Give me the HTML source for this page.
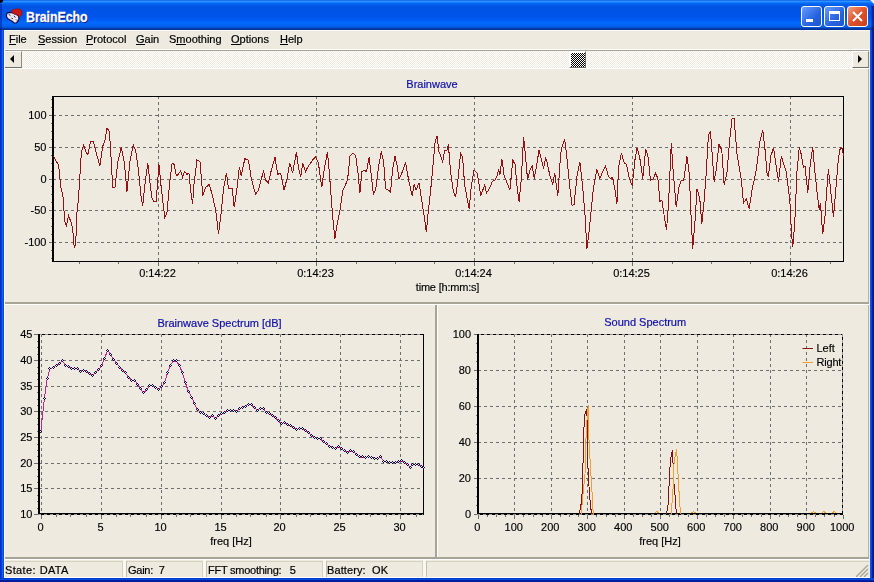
<!DOCTYPE html>
<html><head><meta charset="utf-8">
<style>
*{margin:0;padding:0;box-sizing:border-box}
html,body{width:874px;height:582px;overflow:hidden;background:#0054E3;font-family:"Liberation Sans",sans-serif}
.abs{position:absolute}
#title{left:0;top:0;width:874px;height:30px;border-radius:7px 7px 0 0;
 background:linear-gradient(to bottom,#0058EE 0%,#3593FF 4%,#288EFF 6%,#127DFF 8%,#036FFC 10%,#0262EE 14%,#0057E5 20%,#0054E3 24%,#0055EB 56%,#005BF5 66%,#026AFE 76%,#0062EF 86%,#0052D6 92%,#0040AB 94%,#003092 100%)}
#ttext{left:26px;top:9px;color:#fff;font-weight:bold;font-size:14px;line-height:16px;text-shadow:1px 1px #0F1089;-webkit-text-stroke:0.3px #fff;transform:scaleX(0.88);transform-origin:0 0}
#client{left:4px;top:30px;width:866px;height:548px;background:#EEEAE0;overflow:hidden}
.menu,.status{will-change:transform;-webkit-text-stroke:0.2px #000}
.status{letter-spacing:-0.25px}
.menu{top:3px;font-size:11px;line-height:13px;color:#000}
.menu u{text-decoration:none;position:relative}
.menu u:after{content:"";position:absolute;left:0;right:0;top:11px;height:1px;background:#000}
.tb{top:6px;width:21px;height:21px;border:1px solid #fff;border-radius:3px}
.status{font-size:11px;line-height:13px;color:#000;white-space:nowrap}
.btn{background:#EEEAE0;border-top:1px solid #fff;border-left:1px solid #fff;border-right:1px solid #8C897A;border-bottom:1px solid #716F64}
</style></head><body>
<div id="title" class="abs"></div>
<div class="abs" style="left:0;top:4px;width:2px;height:26px;background:rgba(0,20,140,0.45)"></div>
<div class="abs" style="left:871px;top:5px;width:1px;height:25px;background:rgba(0,20,140,0.3)"></div>
<div class="abs" style="left:872px;top:6px;width:2px;height:24px;background:rgba(0,10,110,0.6)"></div>
<div class="abs" style="left:0;top:0;width:3px;height:3px;background:#000;border-bottom-right-radius:3px"></div>
<div class="abs" style="left:0;top:0;width:2px;height:2px;background:#000"></div>
<div class="abs" style="left:870px;top:0;width:4px;height:4px;background:#F2F0E6;clip-path:polygon(0 0,100% 0,100% 100%)"></div>
<!-- icon -->
<svg class="abs" style="left:0;top:0" width="26" height="28" viewBox="0 0 26 28">
 <path d="M6.5 14.5 L7.5 12.8 L9.5 12.3 L12 12.6 L13.5 13.5 L16.5 14.5 L18.5 16 L19 18.5 L18 21 L16.5 22.8 L14 23 L12.5 21.5 L10 20 L7.5 18.5 L6.5 16.5 Z" fill="#EEE6EE" stroke="#10104A" stroke-width="1.2" stroke-linejoin="round"/>
 <path d="M11.5 11.8 L12.5 9.8 L14.5 9.2 L17 8.8 L19.5 9 L21.5 10.5 L22 12.5 L21.5 15 L20 16.8 L18.5 16 L16.5 14.5 L13.5 13.5 Z" fill="#C81818" stroke="#8A1010" stroke-width="0.6"/>
 <path d="M8.5 14 L10.5 15.8 M14 15.8 L15.3 17.5 M11.5 18.2 L13 18.8 M16 19.5 L17 20.5" stroke="#2A2A48" fill="none" stroke-width="1"/>
</svg>
<div id="ttext" class="abs">BrainEcho</div>
<!-- title buttons -->
<div class="abs tb" style="left:801px;background:linear-gradient(135deg,#6A9CFF,#2663E0 60%,#1F55D0)"><div class="abs" style="left:4px;top:12px;width:7px;height:3px;background:#fff"></div></div>
<div class="abs tb" style="left:824px;background:linear-gradient(135deg,#6A9CFF,#2663E0 60%,#1F55D0)"><div class="abs" style="left:4px;top:4px;width:11px;height:10px;border:1px solid #fff;border-top-width:3px"></div></div>
<div class="abs tb" style="left:847px;background:linear-gradient(135deg,#F0A080,#E0502A 50%,#C8401F)">
 <svg class="abs" style="left:4px;top:4px" width="11" height="11"><path d="M1 1L10 10M10 1L1 10" stroke="#fff" stroke-width="2"/></svg></div>

<div id="client" class="abs">
 <div class="abs" style="left:0;top:0;width:866px;height:1px;background:#FAF8F4"></div>
 <!-- menu -->
 <div class="abs menu" style="left:5px"><u>F</u>ile</div>
 <div class="abs menu" style="left:34px"><u>S</u>ession</div>
 <div class="abs menu" style="left:82px"><u>P</u>rotocol</div>
 <div class="abs menu" style="left:132px"><u>G</u>ain</div>
 <div class="abs menu" style="left:165px">S<u>m</u>oothing</div>
 <div class="abs menu" style="left:227px"><u>O</u>ptions</div>
 <div class="abs menu" style="left:276px"><u>H</u>elp</div>
 <div class="abs" style="left:0;top:19px;width:866px;height:1px;background:#fff"></div>
 <!-- scrollbar -->
 <div class="abs" style="left:0;top:20px;width:865px;height:1px;background:#A8A596"></div>
 <div class="abs" style="left:0;top:21px;width:865px;height:17px;background:repeating-conic-gradient(#FFFFFF 0 25%,#EEEAE0 0 50%) 0 0/2px 2px"></div>
 <div class="abs btn" style="left:0;top:21px;width:18px;height:17px"></div>
 <svg class="abs" style="left:6px;top:25px" width="5" height="8"><path d="M4 0V8L0 4Z" fill="#000"/></svg>
 <div class="abs btn" style="left:848px;top:21px;width:17px;height:17px"></div>
 <svg class="abs" style="left:854px;top:25px" width="5" height="8"><path d="M0 0V8L4 4Z" fill="#000"/></svg>
 <div class="abs" style="left:565px;top:21px;width:17px;height:17px;border-top:1px solid #fff;border-left:1px solid #fff;border-right:1px solid #716F64;border-bottom:1px solid #716F64;background:#fff">
  <div class="abs" style="left:1px;top:1px;width:14px;height:14px;background:repeating-conic-gradient(#000 0 25%,#fff 0 50%) 0 0/2px 2px"></div></div>
 <div class="abs" style="left:0;top:38px;width:866px;height:1px;background:#fff"></div>
 <div class="abs" style="left:864px;top:39px;width:1px;height:489px;background:#B8B5A6"></div>

 <!-- splitters -->
 <div class="abs" style="left:0;top:272px;width:865px;height:2px;background:#A8A596"></div>
 <div class="abs" style="left:0;top:274px;width:865px;height:1px;background:#fff"></div>
 <div class="abs" style="left:431px;top:275px;width:2px;height:252px;background:#A8A596"></div>
 <div class="abs" style="left:433px;top:275px;width:1px;height:252px;background:#fff"></div>

 <!-- status bar -->
 <div class="abs" style="left:0;top:527px;width:866px;height:21px">
  <div class="abs" style="left:0;top:0;width:865px;height:2px;background:#A8A596"></div>
  <div class="abs" style="left:0;top:2px;width:866px;height:1px;background:#fff"></div>
  <div class="abs" style="left:0;top:4px;width:865px;height:1px;background:#D6D2C2"></div>
  <div class="abs" style="left:865px;top:3px;width:1px;height:18px;background:#fff"></div>
  <div class="abs" style="left:0;top:20px;width:866px;height:1px;background:#fff"></div>
  <div class="abs status" style="left:1px;top:7px;letter-spacing:0.35px;word-spacing:-1.5px">State:&nbsp; DATA</div>
  <div class="abs" style="left:118px;top:4px;width:1px;height:16px;background:#D6D2C2"></div>
  <div class="abs" style="left:119px;top:3px;width:3px;height:17px;background:#FAF8F2"></div>
  <div class="abs" style="left:122px;top:4px;width:1px;height:16px;background:#C4C0B0"></div>
  <div class="abs status" style="left:124px;top:7px">Gain:&nbsp; 7</div>
  <div class="abs" style="left:198px;top:4px;width:1px;height:16px;background:#D6D2C2"></div>
  <div class="abs" style="left:199px;top:3px;width:3px;height:17px;background:#FAF8F2"></div>
  <div class="abs" style="left:202px;top:4px;width:1px;height:16px;background:#C4C0B0"></div>
  <div class="abs status" style="left:204px;top:7px">FFT smoothing:&nbsp;&nbsp; 5</div>
  <div class="abs" style="left:318px;top:4px;width:1px;height:16px;background:#D6D2C2"></div>
  <div class="abs" style="left:319px;top:3px;width:3px;height:17px;background:#FAF8F2"></div>
  <div class="abs" style="left:322px;top:4px;width:1px;height:16px;background:#C4C0B0"></div>
  <div class="abs status" style="left:323px;top:7px;letter-spacing:0.1px">Battery:&nbsp; OK</div>
  <div class="abs" style="left:418px;top:4px;width:1px;height:16px;background:#D6D2C2"></div>
  <div class="abs" style="left:419px;top:3px;width:3px;height:17px;background:#FAF8F2"></div>
  <div class="abs" style="left:422px;top:4px;width:1px;height:16px;background:#C4C0B0"></div>
  <svg class="abs" style="left:852px;top:8px" width="13" height="12"><path d="M12 0L0 12M12 4L4 12M12 8L8 12" stroke="#A8A596" stroke-width="1.4"/></svg>
 </div>
</div>
<svg class="abs" style="left:0;top:0;will-change:transform" width="874" height="582">
<g shape-rendering="crispEdges">
<line x1="53" y1="115.5" x2="843" y2="115.5" stroke="#6E6E6E" stroke-dasharray="3 3"/>
<line x1="49" y1="115.5" x2="52" y2="115.5" stroke="#6E6E6E"/>
<line x1="53" y1="147.5" x2="843" y2="147.5" stroke="#6E6E6E" stroke-dasharray="3 3"/>
<line x1="49" y1="147.5" x2="52" y2="147.5" stroke="#6E6E6E"/>
<line x1="53" y1="179.5" x2="843" y2="179.5" stroke="#6E6E6E" stroke-dasharray="3 3"/>
<line x1="49" y1="179.5" x2="52" y2="179.5" stroke="#6E6E6E"/>
<line x1="53" y1="210.5" x2="843" y2="210.5" stroke="#6E6E6E" stroke-dasharray="3 3"/>
<line x1="49" y1="210.5" x2="52" y2="210.5" stroke="#6E6E6E"/>
<line x1="53" y1="242.5" x2="843" y2="242.5" stroke="#6E6E6E" stroke-dasharray="3 3"/>
<line x1="49" y1="242.5" x2="52" y2="242.5" stroke="#6E6E6E"/>
<line x1="158.5" y1="96" x2="158.5" y2="262" stroke="#6E6E6E" stroke-dasharray="3 3"/>
<line x1="158.5" y1="262" x2="158.5" y2="266" stroke="#6E6E6E"/>
<line x1="316.5" y1="96" x2="316.5" y2="262" stroke="#6E6E6E" stroke-dasharray="3 3"/>
<line x1="316.5" y1="262" x2="316.5" y2="266" stroke="#6E6E6E"/>
<line x1="474.5" y1="96" x2="474.5" y2="262" stroke="#6E6E6E" stroke-dasharray="3 3"/>
<line x1="474.5" y1="262" x2="474.5" y2="266" stroke="#6E6E6E"/>
<line x1="632.5" y1="96" x2="632.5" y2="262" stroke="#6E6E6E" stroke-dasharray="3 3"/>
<line x1="632.5" y1="262" x2="632.5" y2="266" stroke="#6E6E6E"/>
<line x1="790.5" y1="96" x2="790.5" y2="262" stroke="#6E6E6E" stroke-dasharray="3 3"/>
<line x1="790.5" y1="262" x2="790.5" y2="266" stroke="#6E6E6E"/>
<line x1="79.5" y1="262" x2="79.5" y2="264" stroke="#6E6E6E"/>
<line x1="118.5" y1="262" x2="118.5" y2="264" stroke="#6E6E6E"/>
<line x1="198.5" y1="262" x2="198.5" y2="264" stroke="#6E6E6E"/>
<line x1="237.5" y1="262" x2="237.5" y2="264" stroke="#6E6E6E"/>
<line x1="276.5" y1="262" x2="276.5" y2="264" stroke="#6E6E6E"/>
<line x1="356.5" y1="262" x2="356.5" y2="264" stroke="#6E6E6E"/>
<line x1="395.5" y1="262" x2="395.5" y2="264" stroke="#6E6E6E"/>
<line x1="434.5" y1="262" x2="434.5" y2="264" stroke="#6E6E6E"/>
<line x1="514.5" y1="262" x2="514.5" y2="264" stroke="#6E6E6E"/>
<line x1="553.5" y1="262" x2="553.5" y2="264" stroke="#6E6E6E"/>
<line x1="592.5" y1="262" x2="592.5" y2="264" stroke="#6E6E6E"/>
<line x1="672.5" y1="262" x2="672.5" y2="264" stroke="#6E6E6E"/>
<line x1="711.5" y1="262" x2="711.5" y2="264" stroke="#6E6E6E"/>
<line x1="750.5" y1="262" x2="750.5" y2="264" stroke="#6E6E6E"/>
<line x1="830.5" y1="262" x2="830.5" y2="264" stroke="#6E6E6E"/>
<line x1="51" y1="99.5" x2="52" y2="99.5" stroke="#6E6E6E"/>
<line x1="51" y1="107.5" x2="52" y2="107.5" stroke="#6E6E6E"/>
<line x1="51" y1="123.5" x2="52" y2="123.5" stroke="#6E6E6E"/>
<line x1="51" y1="131.5" x2="52" y2="131.5" stroke="#6E6E6E"/>
<line x1="51" y1="139.5" x2="52" y2="139.5" stroke="#6E6E6E"/>
<line x1="51" y1="155.5" x2="52" y2="155.5" stroke="#6E6E6E"/>
<line x1="51" y1="163.5" x2="52" y2="163.5" stroke="#6E6E6E"/>
<line x1="51" y1="171.5" x2="52" y2="171.5" stroke="#6E6E6E"/>
<line x1="51" y1="186.5" x2="52" y2="186.5" stroke="#6E6E6E"/>
<line x1="51" y1="194.5" x2="52" y2="194.5" stroke="#6E6E6E"/>
<line x1="51" y1="202.5" x2="52" y2="202.5" stroke="#6E6E6E"/>
<line x1="51" y1="218.5" x2="52" y2="218.5" stroke="#6E6E6E"/>
<line x1="51" y1="226.5" x2="52" y2="226.5" stroke="#6E6E6E"/>
<line x1="51" y1="234.5" x2="52" y2="234.5" stroke="#6E6E6E"/>
<line x1="51" y1="250.5" x2="52" y2="250.5" stroke="#6E6E6E"/>
<line x1="51" y1="258.5" x2="52" y2="258.5" stroke="#6E6E6E"/>
<rect x="52" y="96" width="2" height="166" fill="#000"/>
<rect x="52" y="261" width="792" height="1" fill="#000"/>
<rect x="52" y="96" width="792" height="1" fill="#000"/>
<rect x="843" y="96" width="1" height="166" fill="#000"/>
</g>
<polyline points="53.4,155.9 56.3,161.6 58.6,164.5 60.8,187.3 62.8,194.4 64.8,221.5 66.5,225.8 68.5,215.8 71.4,222.9 72.8,230.1 74.2,247.2 75.7,244.3 77.1,210.1 78.5,198.7 81.4,151.6 83.7,145.1 85.7,151.6 87.9,154.5 90.5,141.6 93.4,141.6 96.2,153.0 99.9,165.9 102.8,145.9 104.8,141.6 107.0,127.9 109.3,131.7 110.5,147.3 112.7,187.3 115.0,187.3 117.9,161.6 121.3,147.3 124.2,161.6 127.0,191.6 129.9,161.6 133.3,145.1 135.6,150.2 138.4,170.2 141.3,198.7 142.7,205.8 145.6,178.7 147.8,163.0 149.8,181.6 152.1,198.7 154.1,201.5 156.1,201.5 159.0,164.5 161.2,187.3 164.7,217.2 166.9,212.9 169.8,181.6 172.1,163.0 174.1,164.5 176.4,175.9 178.4,174.4 180.6,170.7 182.6,177.3 184.6,171.6 186.9,174.4 188.9,173.0 190.6,190.1 192.6,204.4 194.0,184.4 196.9,160.2 200.0,161.6 202.8,195.8 205.7,187.3 209.4,184.4 212.8,197.3 215.7,210.1 218.5,234.3 220.8,215.8 223.7,187.3 226.5,173.0 228.5,188.7 232.2,188.7 234.2,207.2 237.1,187.3 239.3,167.3 241.3,175.9 244.8,158.7 248.5,160.2 251.3,178.7 255.6,194.4 258.5,190.1 261.3,178.7 263.6,171.6 265.6,180.1 268.4,183.0 271.3,170.2 275.0,157.3 277.8,174.4 280.7,173.0 284.1,190.1 287.0,178.7 289.8,163.0 292.7,173.0 296.4,151.6 298.4,167.3 300.7,177.3 302.7,163.0 305.5,171.6 308.4,165.9 312.6,160.2 315.5,156.5 318.4,163.0 321.8,187.3 324.1,170.2 327.5,151.6 329.8,178.7 332.6,215.8 334.9,238.6 337.1,224.4 340.0,210.1 342.8,190.1 345.7,184.4 347.7,178.7 350.0,155.9 352.8,153.0 355.7,155.9 358.0,173.0 359.9,193.0 361.9,171.6 364.2,170.2 366.5,171.6 369.1,157.3 371.4,175.9 373.4,194.4 375.6,190.1 378.5,167.3 381.3,151.6 383.6,161.6 385.6,188.7 388.5,190.1 390.5,192.4 392.7,168.7 395.0,156.5 397.0,164.5 399.0,178.7 401.3,174.4 405.6,163.0 408.4,178.7 412.1,195.8 414.1,184.4 416.1,190.1 419.0,183.0 421.3,197.3 424.1,215.8 426.4,232.3 428.4,210.1 430.4,193.0 432.7,168.7 435.0,143.1 437.0,135.9 439.0,151.6 441.2,157.3 442.7,161.6 444.7,150.2 446.9,150.2 448.4,144.5 450.4,170.2 453.2,190.1 455.5,197.3 457.8,181.6 460.6,153.0 462.6,157.3 464.6,184.4 466.9,197.3 469.2,208.7 471.2,187.3 474.0,170.2 477.1,173.0 478.6,181.6 480.8,195.8 482.8,190.1 484.8,185.0 486.5,193.0 489.4,188.7 492.2,181.6 495.1,180.1 497.1,175.9 498.5,169.6 499.9,174.4 501.9,159.3 504.2,175.9 507.1,183.0 509.9,190.1 512.8,160.2 515.1,164.5 517.1,187.3 519.1,201.5 521.3,178.7 523.6,137.4 525.6,157.3 527.6,180.1 529.9,170.2 532.2,165.9 534.2,178.7 537.0,163.0 539.0,150.2 541.3,158.7 543.6,168.7 545.6,157.3 547.6,164.5 549.9,175.9 552.7,184.4 554.7,173.0 557.8,195.8 560.7,153.0 562.7,144.5 564.7,138.8 567.0,158.7 569.8,187.3 572.1,205.8 574.1,204.4 577.0,175.9 579.8,161.6 582.7,187.3 584.9,212.9 586.9,248.6 589.2,230.1 591.2,210.1 593.2,190.1 595.5,175.9 596.9,169.6 599.8,178.7 602.6,171.6 605.5,165.9 608.3,175.9 610.3,178.7 612.6,177.3 615.5,193.0 616.9,204.4 618.6,167.3 621.4,153.0 624.3,163.0 626.5,164.5 629.4,178.7 632.2,185.8 635.1,158.7 637.1,147.9 639.9,158.7 642.8,178.7 645.7,148.8 647.9,155.9 650.5,180.1 653.4,178.7 655.6,173.0 657.9,178.7 659.9,201.5 661.9,200.1 664.2,215.8 666.5,230.1 668.5,204.4 671.3,143.1 673.3,173.0 676.2,207.2 679.0,187.3 681.3,180.1 683.6,181.0 687.0,156.5 689.3,174.4 691.3,221.5 692.7,248.6 695.0,221.5 697.0,188.7 699.8,198.7 701.8,224.4 704.1,201.5 706.1,174.4 708.4,135.9 710.4,130.8 712.1,153.0 714.1,181.6 716.1,170.2 719.0,144.5 721.8,150.2 724.1,184.4 726.9,173.0 729.8,138.8 732.1,118.2 734.1,118.8 736.9,153.0 741.2,178.7 743.5,203.0 746.3,198.7 749.2,208.7 752.0,190.1 756.0,171.6 759.9,141.6 762.8,130.2 765.1,150.2 767.1,174.4 768.5,175.9 770.8,155.9 773.6,147.9 775.9,164.5 778.5,181.6 781.3,155.9 783.3,163.0 786.2,171.6 788.5,190.1 789.9,201.5 791.3,230.1 792.7,247.2 794.7,224.4 797.0,171.6 799.3,147.3 801.3,154.5 803.3,167.3 805.0,165.9 807.8,193.0 810.1,165.9 812.7,146.8 815.0,173.0 817.0,191.6 819.3,210.1 820.4,203.0 822.7,234.3 825.0,215.8 827.0,187.3 828.4,168.7 831.2,195.8 833.5,217.2 835.5,193.0 838.4,158.7 840.4,147.3 842.1,148.8 843.5,155.9" fill="none" stroke="#961212" stroke-width="1" shape-rendering="crispEdges"/>
<text x="46.5" y="119" text-anchor="end" font-family="Liberation Sans" font-size="11" stroke="#000" stroke-width="0.15">100</text>
<text x="46.5" y="151" text-anchor="end" font-family="Liberation Sans" font-size="11" stroke="#000" stroke-width="0.15">50</text>
<text x="46.5" y="183" text-anchor="end" font-family="Liberation Sans" font-size="11" stroke="#000" stroke-width="0.15">0</text>
<text x="46.5" y="214" text-anchor="end" font-family="Liberation Sans" font-size="11" stroke="#000" stroke-width="0.15">-50</text>
<text x="46.5" y="246" text-anchor="end" font-family="Liberation Sans" font-size="11" stroke="#000" stroke-width="0.15">-100</text>
<text x="157.5" y="277" text-anchor="middle" font-family="Liberation Sans" font-size="11" stroke="#000" stroke-width="0.15">0:14:22</text>
<text x="315.5" y="277" text-anchor="middle" font-family="Liberation Sans" font-size="11" stroke="#000" stroke-width="0.15">0:14:23</text>
<text x="473.5" y="277" text-anchor="middle" font-family="Liberation Sans" font-size="11" stroke="#000" stroke-width="0.15">0:14:24</text>
<text x="631.5" y="277" text-anchor="middle" font-family="Liberation Sans" font-size="11" stroke="#000" stroke-width="0.15">0:14:25</text>
<text x="789.5" y="277" text-anchor="middle" font-family="Liberation Sans" font-size="11" stroke="#000" stroke-width="0.15">0:14:26</text>
<text x="447.5" y="290.5" text-anchor="middle" font-family="Liberation Sans" font-size="11" stroke="#000" stroke-width="0.15" letter-spacing="-0.2">time [h:mm:s]</text>
<text x="432" y="88" text-anchor="middle" font-family="Liberation Sans" font-size="11" fill="#1010A8" stroke="#1010A8" stroke-width="0.2">Brainwave</text>
<g shape-rendering="crispEdges">
<line x1="39" y1="360.5" x2="423" y2="360.5" stroke="#6E6E6E" stroke-dasharray="3 3"/>
<line x1="39" y1="386.5" x2="423" y2="386.5" stroke="#6E6E6E" stroke-dasharray="3 3"/>
<line x1="39" y1="411.5" x2="423" y2="411.5" stroke="#6E6E6E" stroke-dasharray="3 3"/>
<line x1="39" y1="437.5" x2="423" y2="437.5" stroke="#6E6E6E" stroke-dasharray="3 3"/>
<line x1="39" y1="463.5" x2="423" y2="463.5" stroke="#6E6E6E" stroke-dasharray="3 3"/>
<line x1="39" y1="488.5" x2="423" y2="488.5" stroke="#6E6E6E" stroke-dasharray="3 3"/>
<line x1="34" y1="334.5" x2="38" y2="334.5" stroke="#6E6E6E"/>
<line x1="34" y1="360.5" x2="38" y2="360.5" stroke="#6E6E6E"/>
<line x1="34" y1="386.5" x2="38" y2="386.5" stroke="#6E6E6E"/>
<line x1="34" y1="411.5" x2="38" y2="411.5" stroke="#6E6E6E"/>
<line x1="34" y1="437.5" x2="38" y2="437.5" stroke="#6E6E6E"/>
<line x1="34" y1="463.5" x2="38" y2="463.5" stroke="#6E6E6E"/>
<line x1="34" y1="488.5" x2="38" y2="488.5" stroke="#6E6E6E"/>
<line x1="34" y1="514.5" x2="38" y2="514.5" stroke="#6E6E6E"/>
<line x1="37" y1="508.5" x2="38" y2="508.5" stroke="#6E6E6E"/>
<line x1="37" y1="501.5" x2="38" y2="501.5" stroke="#6E6E6E"/>
<line x1="37" y1="495.5" x2="38" y2="495.5" stroke="#6E6E6E"/>
<line x1="37" y1="482.5" x2="38" y2="482.5" stroke="#6E6E6E"/>
<line x1="37" y1="476.5" x2="38" y2="476.5" stroke="#6E6E6E"/>
<line x1="37" y1="469.5" x2="38" y2="469.5" stroke="#6E6E6E"/>
<line x1="37" y1="456.5" x2="38" y2="456.5" stroke="#6E6E6E"/>
<line x1="37" y1="450.5" x2="38" y2="450.5" stroke="#6E6E6E"/>
<line x1="37" y1="444.5" x2="38" y2="444.5" stroke="#6E6E6E"/>
<line x1="37" y1="431.5" x2="38" y2="431.5" stroke="#6E6E6E"/>
<line x1="37" y1="424.5" x2="38" y2="424.5" stroke="#6E6E6E"/>
<line x1="37" y1="418.5" x2="38" y2="418.5" stroke="#6E6E6E"/>
<line x1="37" y1="405.5" x2="38" y2="405.5" stroke="#6E6E6E"/>
<line x1="37" y1="399.5" x2="38" y2="399.5" stroke="#6E6E6E"/>
<line x1="37" y1="392.5" x2="38" y2="392.5" stroke="#6E6E6E"/>
<line x1="37" y1="379.5" x2="38" y2="379.5" stroke="#6E6E6E"/>
<line x1="37" y1="373.5" x2="38" y2="373.5" stroke="#6E6E6E"/>
<line x1="37" y1="367.5" x2="38" y2="367.5" stroke="#6E6E6E"/>
<line x1="37" y1="354.5" x2="38" y2="354.5" stroke="#6E6E6E"/>
<line x1="37" y1="347.5" x2="38" y2="347.5" stroke="#6E6E6E"/>
<line x1="37" y1="341.5" x2="38" y2="341.5" stroke="#6E6E6E"/>
<line x1="41.5" y1="334" x2="41.5" y2="514" stroke="#6E6E6E" stroke-dasharray="3 3"/>
<line x1="41.5" y1="515" x2="41.5" y2="519" stroke="#6E6E6E"/>
<line x1="101.5" y1="334" x2="101.5" y2="514" stroke="#6E6E6E" stroke-dasharray="3 3"/>
<line x1="101.5" y1="515" x2="101.5" y2="519" stroke="#6E6E6E"/>
<line x1="161.5" y1="334" x2="161.5" y2="514" stroke="#6E6E6E" stroke-dasharray="3 3"/>
<line x1="161.5" y1="515" x2="161.5" y2="519" stroke="#6E6E6E"/>
<line x1="221.5" y1="334" x2="221.5" y2="514" stroke="#6E6E6E" stroke-dasharray="3 3"/>
<line x1="221.5" y1="515" x2="221.5" y2="519" stroke="#6E6E6E"/>
<line x1="280.5" y1="334" x2="280.5" y2="514" stroke="#6E6E6E" stroke-dasharray="3 3"/>
<line x1="280.5" y1="515" x2="280.5" y2="519" stroke="#6E6E6E"/>
<line x1="340.5" y1="334" x2="340.5" y2="514" stroke="#6E6E6E" stroke-dasharray="3 3"/>
<line x1="340.5" y1="515" x2="340.5" y2="519" stroke="#6E6E6E"/>
<line x1="400.5" y1="334" x2="400.5" y2="514" stroke="#6E6E6E" stroke-dasharray="3 3"/>
<line x1="400.5" y1="515" x2="400.5" y2="519" stroke="#6E6E6E"/>
<line x1="56.5" y1="515" x2="56.5" y2="517" stroke="#6E6E6E"/>
<line x1="70.5" y1="515" x2="70.5" y2="517" stroke="#6E6E6E"/>
<line x1="86.5" y1="515" x2="86.5" y2="517" stroke="#6E6E6E"/>
<line x1="116.5" y1="515" x2="116.5" y2="517" stroke="#6E6E6E"/>
<line x1="130.5" y1="515" x2="130.5" y2="517" stroke="#6E6E6E"/>
<line x1="146.5" y1="515" x2="146.5" y2="517" stroke="#6E6E6E"/>
<line x1="176.5" y1="515" x2="176.5" y2="517" stroke="#6E6E6E"/>
<line x1="190.5" y1="515" x2="190.5" y2="517" stroke="#6E6E6E"/>
<line x1="206.5" y1="515" x2="206.5" y2="517" stroke="#6E6E6E"/>
<line x1="236.5" y1="515" x2="236.5" y2="517" stroke="#6E6E6E"/>
<line x1="250.5" y1="515" x2="250.5" y2="517" stroke="#6E6E6E"/>
<line x1="266.5" y1="515" x2="266.5" y2="517" stroke="#6E6E6E"/>
<line x1="296.5" y1="515" x2="296.5" y2="517" stroke="#6E6E6E"/>
<line x1="310.5" y1="515" x2="310.5" y2="517" stroke="#6E6E6E"/>
<line x1="326.5" y1="515" x2="326.5" y2="517" stroke="#6E6E6E"/>
<line x1="356.5" y1="515" x2="356.5" y2="517" stroke="#6E6E6E"/>
<line x1="370.5" y1="515" x2="370.5" y2="517" stroke="#6E6E6E"/>
<line x1="386.5" y1="515" x2="386.5" y2="517" stroke="#6E6E6E"/>
<line x1="416.5" y1="515" x2="416.5" y2="517" stroke="#6E6E6E"/>
<rect x="38" y="334" width="2" height="181" fill="#000"/>
<rect x="38" y="513" width="386" height="1" fill="#000"/>
<line x1="38" y1="514.5" x2="424" y2="514.5" stroke="#9A9890"/>
<line x1="41" y1="514.5" x2="424" y2="514.5" stroke="#000" stroke-dasharray="3 3"/>
<line x1="40" y1="334.5" x2="423" y2="334.5" stroke="#9A9890"/>
<line x1="42" y1="334.5" x2="423" y2="334.5" stroke="#000" stroke-dasharray="3 3"/>
<rect x="423" y="334" width="1" height="181" fill="#000"/>
</g>
<polyline points="40.8,431.5 44.4,398.5 47.3,378.5 50.0,368.9 53.3,367.2 56.5,365.3 59.6,363.4 62.5,361.0 65.4,365.3 68.5,367.0 71.6,368.4 74.5,368.4 77.4,368.4 80.5,371.3 83.7,370.1 86.5,371.3 89.4,373.7 92.6,375.4 95.7,372.5 98.6,369.6 101.5,365.8 104.6,358.1 107.7,350.4 110.6,354.5 113.5,359.3 116.6,363.4 119.8,367.2 122.6,370.1 125.5,373.0 128.7,377.3 131.8,380.2 134.7,380.2 137.6,384.5 140.7,388.9 143.6,393.0 146.7,389.8 149.6,385.7 152.7,385.0 155.9,387.4 158.7,389.4 161.6,386.9 164.8,382.1 167.6,372.5 170.3,365.3 173.2,361.0 176.3,361.0 179.4,365.3 182.3,373.0 185.2,382.1 188.3,391.3 191.7,397.1 194.4,403.8 197.3,409.8 200.4,412.2 203.3,413.9 206.4,415.8 209.3,417.0 212.4,415.8 215.3,418.2 218.4,415.8 221.3,413.9 224.3,413.0 227.2,410.1 230.1,410.6 233.2,410.1 236.4,411.3 239.2,408.9 242.1,407.2 245.3,406.5 248.4,404.1 251.3,404.8 254.2,407.7 257.3,410.1 260.4,408.2 263.3,408.9 266.2,412.0 269.3,413.7 272.4,415.4 275.3,417.3 278.2,420.9 281.3,423.3 284.5,422.6 287.4,424.5 290.2,425.7 293.4,427.4 296.5,429.3 299.4,428.8 302.3,428.1 305.4,430.5 308.5,432.9 311.4,435.3 314.3,437.0 317.4,438.5 320.6,439.0 323.4,441.8 326.6,443.8 329.5,446.2 332.6,447.4 335.5,448.6 338.4,446.9 341.5,448.6 344.6,451.0 347.5,452.2 350.4,451.0 353.5,451.5 356.6,454.6 359.5,457.0 362.4,457.0 365.5,457.7 368.7,456.3 371.6,457.7 374.7,458.2 377.6,458.7 380.7,457.0 383.6,461.1 386.5,461.8 389.6,462.5 392.7,462.5 395.6,462.5 398.5,461.8 401.6,460.6 404.7,462.5 407.6,464.2 410.0,467.3 412.4,464.2 415.3,464.2 418.5,464.9 421.6,466.6 423.3,467.3" fill="none" stroke="#C02890" stroke-width="1" shape-rendering="crispEdges"/>
<path d="M40 430h1v1h-1zM39 431h1v1h-1zM41 431h1v1h-1zM40 432h1v1h-1zM44 397h1v1h-1zM43 398h1v1h-1zM45 398h1v1h-1zM44 399h1v1h-1zM47 377h1v1h-1zM46 378h1v1h-1zM48 378h1v1h-1zM47 379h1v1h-1zM49 367h1v1h-1zM48 368h1v1h-1zM50 368h1v1h-1zM49 369h1v1h-1zM53 366h1v1h-1zM52 367h1v1h-1zM54 367h1v1h-1zM53 368h1v1h-1zM56 364h1v1h-1zM55 365h1v1h-1zM57 365h1v1h-1zM56 366h1v1h-1zM59 362h1v1h-1zM58 363h1v1h-1zM60 363h1v1h-1zM59 364h1v1h-1zM62 359h1v1h-1zM61 360h1v1h-1zM63 360h1v1h-1zM62 361h1v1h-1zM65 364h1v1h-1zM64 365h1v1h-1zM66 365h1v1h-1zM65 366h1v1h-1zM68 365h1v1h-1zM67 366h1v1h-1zM69 366h1v1h-1zM68 367h1v1h-1zM71 367h1v1h-1zM70 368h1v1h-1zM72 368h1v1h-1zM71 369h1v1h-1zM74 367h1v1h-1zM73 368h1v1h-1zM75 368h1v1h-1zM74 369h1v1h-1zM77 367h1v1h-1zM76 368h1v1h-1zM78 368h1v1h-1zM77 369h1v1h-1zM80 370h1v1h-1zM79 371h1v1h-1zM81 371h1v1h-1zM80 372h1v1h-1zM83 369h1v1h-1zM82 370h1v1h-1zM84 370h1v1h-1zM83 371h1v1h-1zM86 370h1v1h-1zM85 371h1v1h-1zM87 371h1v1h-1zM86 372h1v1h-1zM89 372h1v1h-1zM88 373h1v1h-1zM90 373h1v1h-1zM89 374h1v1h-1zM92 374h1v1h-1zM91 375h1v1h-1zM93 375h1v1h-1zM92 376h1v1h-1zM95 371h1v1h-1zM94 372h1v1h-1zM96 372h1v1h-1zM95 373h1v1h-1zM98 368h1v1h-1zM97 369h1v1h-1zM99 369h1v1h-1zM98 370h1v1h-1zM101 364h1v1h-1zM100 365h1v1h-1zM102 365h1v1h-1zM101 366h1v1h-1zM104 357h1v1h-1zM103 358h1v1h-1zM105 358h1v1h-1zM104 359h1v1h-1zM107 349h1v1h-1zM106 350h1v1h-1zM108 350h1v1h-1zM107 351h1v1h-1zM110 353h1v1h-1zM109 354h1v1h-1zM111 354h1v1h-1zM110 355h1v1h-1zM113 358h1v1h-1zM112 359h1v1h-1zM114 359h1v1h-1zM113 360h1v1h-1zM116 362h1v1h-1zM115 363h1v1h-1zM117 363h1v1h-1zM116 364h1v1h-1zM119 366h1v1h-1zM118 367h1v1h-1zM120 367h1v1h-1zM119 368h1v1h-1zM122 369h1v1h-1zM121 370h1v1h-1zM123 370h1v1h-1zM122 371h1v1h-1zM125 371h1v1h-1zM124 372h1v1h-1zM126 372h1v1h-1zM125 373h1v1h-1zM128 376h1v1h-1zM127 377h1v1h-1zM129 377h1v1h-1zM128 378h1v1h-1zM131 379h1v1h-1zM130 380h1v1h-1zM132 380h1v1h-1zM131 381h1v1h-1zM134 379h1v1h-1zM133 380h1v1h-1zM135 380h1v1h-1zM134 381h1v1h-1zM137 383h1v1h-1zM136 384h1v1h-1zM138 384h1v1h-1zM137 385h1v1h-1zM140 387h1v1h-1zM139 388h1v1h-1zM141 388h1v1h-1zM140 389h1v1h-1zM143 391h1v1h-1zM142 392h1v1h-1zM144 392h1v1h-1zM143 393h1v1h-1zM146 388h1v1h-1zM145 389h1v1h-1zM147 389h1v1h-1zM146 390h1v1h-1zM149 384h1v1h-1zM148 385h1v1h-1zM150 385h1v1h-1zM149 386h1v1h-1zM152 384h1v1h-1zM151 385h1v1h-1zM153 385h1v1h-1zM152 386h1v1h-1zM155 386h1v1h-1zM154 387h1v1h-1zM156 387h1v1h-1zM155 388h1v1h-1zM158 388h1v1h-1zM157 389h1v1h-1zM159 389h1v1h-1zM158 390h1v1h-1zM161 385h1v1h-1zM160 386h1v1h-1zM162 386h1v1h-1zM161 387h1v1h-1zM164 381h1v1h-1zM163 382h1v1h-1zM165 382h1v1h-1zM164 383h1v1h-1zM167 371h1v1h-1zM166 372h1v1h-1zM168 372h1v1h-1zM167 373h1v1h-1zM170 364h1v1h-1zM169 365h1v1h-1zM171 365h1v1h-1zM170 366h1v1h-1zM173 359h1v1h-1zM172 360h1v1h-1zM174 360h1v1h-1zM173 361h1v1h-1zM176 359h1v1h-1zM175 360h1v1h-1zM177 360h1v1h-1zM176 361h1v1h-1zM179 364h1v1h-1zM178 365h1v1h-1zM180 365h1v1h-1zM179 366h1v1h-1zM182 371h1v1h-1zM181 372h1v1h-1zM183 372h1v1h-1zM182 373h1v1h-1zM185 381h1v1h-1zM184 382h1v1h-1zM186 382h1v1h-1zM185 383h1v1h-1zM188 390h1v1h-1zM187 391h1v1h-1zM189 391h1v1h-1zM188 392h1v1h-1zM191 396h1v1h-1zM190 397h1v1h-1zM192 397h1v1h-1zM191 398h1v1h-1zM194 402h1v1h-1zM193 403h1v1h-1zM195 403h1v1h-1zM194 404h1v1h-1zM197 408h1v1h-1zM196 409h1v1h-1zM198 409h1v1h-1zM197 410h1v1h-1zM200 411h1v1h-1zM199 412h1v1h-1zM201 412h1v1h-1zM200 413h1v1h-1zM203 412h1v1h-1zM202 413h1v1h-1zM204 413h1v1h-1zM203 414h1v1h-1zM206 414h1v1h-1zM205 415h1v1h-1zM207 415h1v1h-1zM206 416h1v1h-1zM209 416h1v1h-1zM208 417h1v1h-1zM210 417h1v1h-1zM209 418h1v1h-1zM212 414h1v1h-1zM211 415h1v1h-1zM213 415h1v1h-1zM212 416h1v1h-1zM215 417h1v1h-1zM214 418h1v1h-1zM216 418h1v1h-1zM215 419h1v1h-1zM218 414h1v1h-1zM217 415h1v1h-1zM219 415h1v1h-1zM218 416h1v1h-1zM221 412h1v1h-1zM220 413h1v1h-1zM222 413h1v1h-1zM221 414h1v1h-1zM224 411h1v1h-1zM223 412h1v1h-1zM225 412h1v1h-1zM224 413h1v1h-1zM227 409h1v1h-1zM226 410h1v1h-1zM228 410h1v1h-1zM227 411h1v1h-1zM230 409h1v1h-1zM229 410h1v1h-1zM231 410h1v1h-1zM230 411h1v1h-1zM233 409h1v1h-1zM232 410h1v1h-1zM234 410h1v1h-1zM233 411h1v1h-1zM236 410h1v1h-1zM235 411h1v1h-1zM237 411h1v1h-1zM236 412h1v1h-1zM239 407h1v1h-1zM238 408h1v1h-1zM240 408h1v1h-1zM239 409h1v1h-1zM242 406h1v1h-1zM241 407h1v1h-1zM243 407h1v1h-1zM242 408h1v1h-1zM245 405h1v1h-1zM244 406h1v1h-1zM246 406h1v1h-1zM245 407h1v1h-1zM248 403h1v1h-1zM247 404h1v1h-1zM249 404h1v1h-1zM248 405h1v1h-1zM251 403h1v1h-1zM250 404h1v1h-1zM252 404h1v1h-1zM251 405h1v1h-1zM254 406h1v1h-1zM253 407h1v1h-1zM255 407h1v1h-1zM254 408h1v1h-1zM257 409h1v1h-1zM256 410h1v1h-1zM258 410h1v1h-1zM257 411h1v1h-1zM260 407h1v1h-1zM259 408h1v1h-1zM261 408h1v1h-1zM260 409h1v1h-1zM263 407h1v1h-1zM262 408h1v1h-1zM264 408h1v1h-1zM263 409h1v1h-1zM266 411h1v1h-1zM265 412h1v1h-1zM267 412h1v1h-1zM266 413h1v1h-1zM269 412h1v1h-1zM268 413h1v1h-1zM270 413h1v1h-1zM269 414h1v1h-1zM272 414h1v1h-1zM271 415h1v1h-1zM273 415h1v1h-1zM272 416h1v1h-1zM275 416h1v1h-1zM274 417h1v1h-1zM276 417h1v1h-1zM275 418h1v1h-1zM278 419h1v1h-1zM277 420h1v1h-1zM279 420h1v1h-1zM278 421h1v1h-1zM281 422h1v1h-1zM280 423h1v1h-1zM282 423h1v1h-1zM281 424h1v1h-1zM284 421h1v1h-1zM283 422h1v1h-1zM285 422h1v1h-1zM284 423h1v1h-1zM287 423h1v1h-1zM286 424h1v1h-1zM288 424h1v1h-1zM287 425h1v1h-1zM290 424h1v1h-1zM289 425h1v1h-1zM291 425h1v1h-1zM290 426h1v1h-1zM293 426h1v1h-1zM292 427h1v1h-1zM294 427h1v1h-1zM293 428h1v1h-1zM296 428h1v1h-1zM295 429h1v1h-1zM297 429h1v1h-1zM296 430h1v1h-1zM299 427h1v1h-1zM298 428h1v1h-1zM300 428h1v1h-1zM299 429h1v1h-1zM302 427h1v1h-1zM301 428h1v1h-1zM303 428h1v1h-1zM302 429h1v1h-1zM305 429h1v1h-1zM304 430h1v1h-1zM306 430h1v1h-1zM305 431h1v1h-1zM308 431h1v1h-1zM307 432h1v1h-1zM309 432h1v1h-1zM308 433h1v1h-1zM311 434h1v1h-1zM310 435h1v1h-1zM312 435h1v1h-1zM311 436h1v1h-1zM314 436h1v1h-1zM313 437h1v1h-1zM315 437h1v1h-1zM314 438h1v1h-1zM317 437h1v1h-1zM316 438h1v1h-1zM318 438h1v1h-1zM317 439h1v1h-1zM320 437h1v1h-1zM319 438h1v1h-1zM321 438h1v1h-1zM320 439h1v1h-1zM323 440h1v1h-1zM322 441h1v1h-1zM324 441h1v1h-1zM323 442h1v1h-1zM326 442h1v1h-1zM325 443h1v1h-1zM327 443h1v1h-1zM326 444h1v1h-1zM329 445h1v1h-1zM328 446h1v1h-1zM330 446h1v1h-1zM329 447h1v1h-1zM332 446h1v1h-1zM331 447h1v1h-1zM333 447h1v1h-1zM332 448h1v1h-1zM335 447h1v1h-1zM334 448h1v1h-1zM336 448h1v1h-1zM335 449h1v1h-1zM338 445h1v1h-1zM337 446h1v1h-1zM339 446h1v1h-1zM338 447h1v1h-1zM341 447h1v1h-1zM340 448h1v1h-1zM342 448h1v1h-1zM341 449h1v1h-1zM344 449h1v1h-1zM343 450h1v1h-1zM345 450h1v1h-1zM344 451h1v1h-1zM347 451h1v1h-1zM346 452h1v1h-1zM348 452h1v1h-1zM347 453h1v1h-1zM350 449h1v1h-1zM349 450h1v1h-1zM351 450h1v1h-1zM350 451h1v1h-1zM353 450h1v1h-1zM352 451h1v1h-1zM354 451h1v1h-1zM353 452h1v1h-1zM356 453h1v1h-1zM355 454h1v1h-1zM357 454h1v1h-1zM356 455h1v1h-1zM359 455h1v1h-1zM358 456h1v1h-1zM360 456h1v1h-1zM359 457h1v1h-1zM362 455h1v1h-1zM361 456h1v1h-1zM363 456h1v1h-1zM362 457h1v1h-1zM365 456h1v1h-1zM364 457h1v1h-1zM366 457h1v1h-1zM365 458h1v1h-1zM368 455h1v1h-1zM367 456h1v1h-1zM369 456h1v1h-1zM368 457h1v1h-1zM371 456h1v1h-1zM370 457h1v1h-1zM372 457h1v1h-1zM371 458h1v1h-1zM374 457h1v1h-1zM373 458h1v1h-1zM375 458h1v1h-1zM374 459h1v1h-1zM377 457h1v1h-1zM376 458h1v1h-1zM378 458h1v1h-1zM377 459h1v1h-1zM380 455h1v1h-1zM379 456h1v1h-1zM381 456h1v1h-1zM380 457h1v1h-1zM383 460h1v1h-1zM382 461h1v1h-1zM384 461h1v1h-1zM383 462h1v1h-1zM386 460h1v1h-1zM385 461h1v1h-1zM387 461h1v1h-1zM386 462h1v1h-1zM389 461h1v1h-1zM388 462h1v1h-1zM390 462h1v1h-1zM389 463h1v1h-1zM392 461h1v1h-1zM391 462h1v1h-1zM393 462h1v1h-1zM392 463h1v1h-1zM395 461h1v1h-1zM394 462h1v1h-1zM396 462h1v1h-1zM395 463h1v1h-1zM398 460h1v1h-1zM397 461h1v1h-1zM399 461h1v1h-1zM398 462h1v1h-1zM401 459h1v1h-1zM400 460h1v1h-1zM402 460h1v1h-1zM401 461h1v1h-1zM404 461h1v1h-1zM403 462h1v1h-1zM405 462h1v1h-1zM404 463h1v1h-1zM407 463h1v1h-1zM406 464h1v1h-1zM408 464h1v1h-1zM407 465h1v1h-1zM410 466h1v1h-1zM409 467h1v1h-1zM411 467h1v1h-1zM410 468h1v1h-1zM412 463h1v1h-1zM411 464h1v1h-1zM413 464h1v1h-1zM412 465h1v1h-1zM415 463h1v1h-1zM414 464h1v1h-1zM416 464h1v1h-1zM415 465h1v1h-1zM418 463h1v1h-1zM417 464h1v1h-1zM419 464h1v1h-1zM418 465h1v1h-1zM421 465h1v1h-1zM420 466h1v1h-1zM422 466h1v1h-1zM421 467h1v1h-1zM423 466h1v1h-1zM422 467h1v1h-1zM424 467h1v1h-1zM423 468h1v1h-1z" fill="#0A0A44" shape-rendering="crispEdges"/>
<path d="M40 431h1v1h-1zM44 398h1v1h-1zM47 378h1v1h-1zM49 368h1v1h-1zM53 367h1v1h-1zM56 365h1v1h-1zM59 363h1v1h-1zM62 360h1v1h-1zM65 365h1v1h-1zM68 366h1v1h-1zM71 368h1v1h-1zM74 368h1v1h-1zM77 368h1v1h-1zM80 371h1v1h-1zM83 370h1v1h-1zM86 371h1v1h-1zM89 373h1v1h-1zM92 375h1v1h-1zM95 372h1v1h-1zM98 369h1v1h-1zM101 365h1v1h-1zM104 358h1v1h-1zM107 350h1v1h-1zM110 354h1v1h-1zM113 359h1v1h-1zM116 363h1v1h-1zM119 367h1v1h-1zM122 370h1v1h-1zM125 372h1v1h-1zM128 377h1v1h-1zM131 380h1v1h-1zM134 380h1v1h-1zM137 384h1v1h-1zM140 388h1v1h-1zM143 392h1v1h-1zM146 389h1v1h-1zM149 385h1v1h-1zM152 385h1v1h-1zM155 387h1v1h-1zM158 389h1v1h-1zM161 386h1v1h-1zM164 382h1v1h-1zM167 372h1v1h-1zM170 365h1v1h-1zM173 360h1v1h-1zM176 360h1v1h-1zM179 365h1v1h-1zM182 372h1v1h-1zM185 382h1v1h-1zM188 391h1v1h-1zM191 397h1v1h-1zM194 403h1v1h-1zM197 409h1v1h-1zM200 412h1v1h-1zM203 413h1v1h-1zM206 415h1v1h-1zM209 417h1v1h-1zM212 415h1v1h-1zM215 418h1v1h-1zM218 415h1v1h-1zM221 413h1v1h-1zM224 412h1v1h-1zM227 410h1v1h-1zM230 410h1v1h-1zM233 410h1v1h-1zM236 411h1v1h-1zM239 408h1v1h-1zM242 407h1v1h-1zM245 406h1v1h-1zM248 404h1v1h-1zM251 404h1v1h-1zM254 407h1v1h-1zM257 410h1v1h-1zM260 408h1v1h-1zM263 408h1v1h-1zM266 412h1v1h-1zM269 413h1v1h-1zM272 415h1v1h-1zM275 417h1v1h-1zM278 420h1v1h-1zM281 423h1v1h-1zM284 422h1v1h-1zM287 424h1v1h-1zM290 425h1v1h-1zM293 427h1v1h-1zM296 429h1v1h-1zM299 428h1v1h-1zM302 428h1v1h-1zM305 430h1v1h-1zM308 432h1v1h-1zM311 435h1v1h-1zM314 437h1v1h-1zM317 438h1v1h-1zM320 438h1v1h-1zM323 441h1v1h-1zM326 443h1v1h-1zM329 446h1v1h-1zM332 447h1v1h-1zM335 448h1v1h-1zM338 446h1v1h-1zM341 448h1v1h-1zM344 450h1v1h-1zM347 452h1v1h-1zM350 450h1v1h-1zM353 451h1v1h-1zM356 454h1v1h-1zM359 456h1v1h-1zM362 456h1v1h-1zM365 457h1v1h-1zM368 456h1v1h-1zM371 457h1v1h-1zM374 458h1v1h-1zM377 458h1v1h-1zM380 456h1v1h-1zM383 461h1v1h-1zM386 461h1v1h-1zM389 462h1v1h-1zM392 462h1v1h-1zM395 462h1v1h-1zM398 461h1v1h-1zM401 460h1v1h-1zM404 462h1v1h-1zM407 464h1v1h-1zM410 467h1v1h-1zM412 464h1v1h-1zM415 464h1v1h-1zM418 464h1v1h-1zM421 466h1v1h-1zM423 467h1v1h-1z" fill="#F6EEF6" shape-rendering="crispEdges"/>
<text x="32.5" y="338" text-anchor="end" font-family="Liberation Sans" font-size="11" stroke="#000" stroke-width="0.15">45</text>
<text x="32.5" y="364" text-anchor="end" font-family="Liberation Sans" font-size="11" stroke="#000" stroke-width="0.15">40</text>
<text x="32.5" y="390" text-anchor="end" font-family="Liberation Sans" font-size="11" stroke="#000" stroke-width="0.15">35</text>
<text x="32.5" y="415" text-anchor="end" font-family="Liberation Sans" font-size="11" stroke="#000" stroke-width="0.15">30</text>
<text x="32.5" y="441" text-anchor="end" font-family="Liberation Sans" font-size="11" stroke="#000" stroke-width="0.15">25</text>
<text x="32.5" y="467" text-anchor="end" font-family="Liberation Sans" font-size="11" stroke="#000" stroke-width="0.15">20</text>
<text x="32.5" y="492" text-anchor="end" font-family="Liberation Sans" font-size="11" stroke="#000" stroke-width="0.15">15</text>
<text x="32.5" y="518" text-anchor="end" font-family="Liberation Sans" font-size="11" stroke="#000" stroke-width="0.15">10</text>
<text x="40.5" y="530.5" text-anchor="middle" font-family="Liberation Sans" font-size="11" stroke="#000" stroke-width="0.15">0</text>
<text x="100.5" y="530.5" text-anchor="middle" font-family="Liberation Sans" font-size="11" stroke="#000" stroke-width="0.15">5</text>
<text x="160.5" y="530.5" text-anchor="middle" font-family="Liberation Sans" font-size="11" stroke="#000" stroke-width="0.15">10</text>
<text x="220.5" y="530.5" text-anchor="middle" font-family="Liberation Sans" font-size="11" stroke="#000" stroke-width="0.15">15</text>
<text x="279.5" y="530.5" text-anchor="middle" font-family="Liberation Sans" font-size="11" stroke="#000" stroke-width="0.15">20</text>
<text x="339.5" y="530.5" text-anchor="middle" font-family="Liberation Sans" font-size="11" stroke="#000" stroke-width="0.15">25</text>
<text x="399.5" y="530.5" text-anchor="middle" font-family="Liberation Sans" font-size="11" stroke="#000" stroke-width="0.15">30</text>
<text x="231" y="545" text-anchor="middle" font-family="Liberation Sans" font-size="11" stroke="#000" stroke-width="0.15">freq [Hz]</text>
<text x="219.5" y="327" text-anchor="middle" font-family="Liberation Sans" font-size="11" fill="#1010A8" stroke="#1010A8" stroke-width="0.2">Brainwave Spectrum [dB]</text>
<g shape-rendering="crispEdges">
<line x1="478" y1="370.5" x2="842" y2="370.5" stroke="#6E6E6E" stroke-dasharray="3 3"/>
<line x1="478" y1="406.5" x2="842" y2="406.5" stroke="#6E6E6E" stroke-dasharray="3 3"/>
<line x1="478" y1="442.5" x2="842" y2="442.5" stroke="#6E6E6E" stroke-dasharray="3 3"/>
<line x1="478" y1="478.5" x2="842" y2="478.5" stroke="#6E6E6E" stroke-dasharray="3 3"/>
<line x1="474" y1="334.5" x2="477" y2="334.5" stroke="#6E6E6E"/>
<line x1="474" y1="370.5" x2="477" y2="370.5" stroke="#6E6E6E"/>
<line x1="474" y1="406.5" x2="477" y2="406.5" stroke="#6E6E6E"/>
<line x1="474" y1="442.5" x2="477" y2="442.5" stroke="#6E6E6E"/>
<line x1="474" y1="478.5" x2="477" y2="478.5" stroke="#6E6E6E"/>
<line x1="474" y1="514.5" x2="477" y2="514.5" stroke="#6E6E6E"/>
<line x1="476" y1="505.5" x2="477" y2="505.5" stroke="#6E6E6E"/>
<line x1="476" y1="496.5" x2="477" y2="496.5" stroke="#6E6E6E"/>
<line x1="476" y1="487.5" x2="477" y2="487.5" stroke="#6E6E6E"/>
<line x1="476" y1="469.5" x2="477" y2="469.5" stroke="#6E6E6E"/>
<line x1="476" y1="460.5" x2="477" y2="460.5" stroke="#6E6E6E"/>
<line x1="476" y1="451.5" x2="477" y2="451.5" stroke="#6E6E6E"/>
<line x1="476" y1="433.5" x2="477" y2="433.5" stroke="#6E6E6E"/>
<line x1="476" y1="424.5" x2="477" y2="424.5" stroke="#6E6E6E"/>
<line x1="476" y1="415.5" x2="477" y2="415.5" stroke="#6E6E6E"/>
<line x1="476" y1="397.5" x2="477" y2="397.5" stroke="#6E6E6E"/>
<line x1="476" y1="388.5" x2="477" y2="388.5" stroke="#6E6E6E"/>
<line x1="476" y1="379.5" x2="477" y2="379.5" stroke="#6E6E6E"/>
<line x1="476" y1="361.5" x2="477" y2="361.5" stroke="#6E6E6E"/>
<line x1="476" y1="352.5" x2="477" y2="352.5" stroke="#6E6E6E"/>
<line x1="476" y1="343.5" x2="477" y2="343.5" stroke="#6E6E6E"/>
<line x1="514.5" y1="334" x2="514.5" y2="514" stroke="#6E6E6E" stroke-dasharray="3 3"/>
<line x1="514.5" y1="515" x2="514.5" y2="519" stroke="#6E6E6E"/>
<line x1="551.5" y1="334" x2="551.5" y2="514" stroke="#6E6E6E" stroke-dasharray="3 3"/>
<line x1="551.5" y1="515" x2="551.5" y2="519" stroke="#6E6E6E"/>
<line x1="587.5" y1="334" x2="587.5" y2="514" stroke="#6E6E6E" stroke-dasharray="3 3"/>
<line x1="587.5" y1="515" x2="587.5" y2="519" stroke="#6E6E6E"/>
<line x1="624.5" y1="334" x2="624.5" y2="514" stroke="#6E6E6E" stroke-dasharray="3 3"/>
<line x1="624.5" y1="515" x2="624.5" y2="519" stroke="#6E6E6E"/>
<line x1="660.5" y1="334" x2="660.5" y2="514" stroke="#6E6E6E" stroke-dasharray="3 3"/>
<line x1="660.5" y1="515" x2="660.5" y2="519" stroke="#6E6E6E"/>
<line x1="697.5" y1="334" x2="697.5" y2="514" stroke="#6E6E6E" stroke-dasharray="3 3"/>
<line x1="697.5" y1="515" x2="697.5" y2="519" stroke="#6E6E6E"/>
<line x1="733.5" y1="334" x2="733.5" y2="514" stroke="#6E6E6E" stroke-dasharray="3 3"/>
<line x1="733.5" y1="515" x2="733.5" y2="519" stroke="#6E6E6E"/>
<line x1="770.5" y1="334" x2="770.5" y2="514" stroke="#6E6E6E" stroke-dasharray="3 3"/>
<line x1="770.5" y1="515" x2="770.5" y2="519" stroke="#6E6E6E"/>
<line x1="806.5" y1="334" x2="806.5" y2="514" stroke="#6E6E6E" stroke-dasharray="3 3"/>
<line x1="806.5" y1="515" x2="806.5" y2="519" stroke="#6E6E6E"/>
<line x1="478.5" y1="515" x2="478.5" y2="519" stroke="#6E6E6E"/>
<line x1="843.5" y1="515" x2="843.5" y2="519" stroke="#6E6E6E"/>
<line x1="487.5" y1="515" x2="487.5" y2="517" stroke="#6E6E6E"/>
<line x1="496.5" y1="515" x2="496.5" y2="517" stroke="#6E6E6E"/>
<line x1="505.5" y1="515" x2="505.5" y2="517" stroke="#6E6E6E"/>
<line x1="523.5" y1="515" x2="523.5" y2="517" stroke="#6E6E6E"/>
<line x1="533.5" y1="515" x2="533.5" y2="517" stroke="#6E6E6E"/>
<line x1="542.5" y1="515" x2="542.5" y2="517" stroke="#6E6E6E"/>
<line x1="560.5" y1="515" x2="560.5" y2="517" stroke="#6E6E6E"/>
<line x1="569.5" y1="515" x2="569.5" y2="517" stroke="#6E6E6E"/>
<line x1="578.5" y1="515" x2="578.5" y2="517" stroke="#6E6E6E"/>
<line x1="596.5" y1="515" x2="596.5" y2="517" stroke="#6E6E6E"/>
<line x1="606.5" y1="515" x2="606.5" y2="517" stroke="#6E6E6E"/>
<line x1="615.5" y1="515" x2="615.5" y2="517" stroke="#6E6E6E"/>
<line x1="633.5" y1="515" x2="633.5" y2="517" stroke="#6E6E6E"/>
<line x1="642.5" y1="515" x2="642.5" y2="517" stroke="#6E6E6E"/>
<line x1="651.5" y1="515" x2="651.5" y2="517" stroke="#6E6E6E"/>
<line x1="669.5" y1="515" x2="669.5" y2="517" stroke="#6E6E6E"/>
<line x1="678.5" y1="515" x2="678.5" y2="517" stroke="#6E6E6E"/>
<line x1="688.5" y1="515" x2="688.5" y2="517" stroke="#6E6E6E"/>
<line x1="706.5" y1="515" x2="706.5" y2="517" stroke="#6E6E6E"/>
<line x1="715.5" y1="515" x2="715.5" y2="517" stroke="#6E6E6E"/>
<line x1="724.5" y1="515" x2="724.5" y2="517" stroke="#6E6E6E"/>
<line x1="742.5" y1="515" x2="742.5" y2="517" stroke="#6E6E6E"/>
<line x1="751.5" y1="515" x2="751.5" y2="517" stroke="#6E6E6E"/>
<line x1="761.5" y1="515" x2="761.5" y2="517" stroke="#6E6E6E"/>
<line x1="779.5" y1="515" x2="779.5" y2="517" stroke="#6E6E6E"/>
<line x1="788.5" y1="515" x2="788.5" y2="517" stroke="#6E6E6E"/>
<line x1="797.5" y1="515" x2="797.5" y2="517" stroke="#6E6E6E"/>
<line x1="815.5" y1="515" x2="815.5" y2="517" stroke="#6E6E6E"/>
<line x1="824.5" y1="515" x2="824.5" y2="517" stroke="#6E6E6E"/>
<line x1="834.5" y1="515" x2="834.5" y2="517" stroke="#6E6E6E"/>
<rect x="477" y="334" width="2" height="181" fill="#000"/>
<rect x="477" y="513" width="366" height="1" fill="#000"/>
<line x1="477" y1="514.5" x2="843" y2="514.5" stroke="#9A9890"/>
<line x1="480" y1="514.5" x2="843" y2="514.5" stroke="#000" stroke-dasharray="3 3"/>
<line x1="479" y1="334.5" x2="843" y2="334.5" stroke="#9A9890"/>
<line x1="481" y1="334.5" x2="843" y2="334.5" stroke="#000" stroke-dasharray="3 3"/>
<rect x="842" y="334" width="1" height="1" fill="#000"/>
<line x1="842.5" y1="334" x2="842.5" y2="513" stroke="#9A9890"/>
<line x1="842.5" y1="337" x2="842.5" y2="513" stroke="#000" stroke-dasharray="3 3"/>
</g>
<polyline points="578.5,513.0 579.4,513.0 581.8,500.5 582.6,478.5 583.6,440.0 584.4,416.0 585.4,412.4 586.5,409.3 587.3,420.0 588.1,474.0 590.0,500.0 591.4,513.0 592.5,513.0" fill="none" stroke="#8B1010" stroke-width="1" shape-rendering="crispEdges"/>
<polyline points="580.5,513.0 581.2,513.0 585.0,474.0 585.9,440.0 587.0,420.0 588.3,405.0 588.6,420.0 589.0,440.0 590.4,466.0 591.8,488.0 593.2,513.0 594.0,513.0" fill="none" stroke="#F0A030" stroke-width="1" shape-rendering="crispEdges"/>
<polyline points="666.0,513.0 666.7,513.0 668.1,504.0 669.4,478.0 670.4,460.6 671.5,453.7 672.5,450.3 672.9,460.0 674.0,484.0 675.3,498.0 676.3,513.0 677.0,513.0" fill="none" stroke="#8B1010" stroke-width="1" shape-rendering="crispEdges"/>
<polyline points="670.5,513.0 671.2,513.0 672.9,492.0 674.2,460.0 675.6,455.0 676.6,449.0 677.4,463.0 678.6,485.0 680.4,513.0 681.0,513.0" fill="none" stroke="#F0A030" stroke-width="1" shape-rendering="crispEdges"/>
<polyline points="654.8,513.0 656.8,511.5 658.8,513.0" fill="none" stroke="#F0A030" stroke-width="1" shape-rendering="crispEdges"/>
<polyline points="691.5,513.0 693.5,511.5 695.5,513.0" fill="none" stroke="#F0A030" stroke-width="1" shape-rendering="crispEdges"/>
<polyline points="811.6,513.0 813.6,511.5 815.6,513.0" fill="none" stroke="#F0A030" stroke-width="1" shape-rendering="crispEdges"/>
<polyline points="821.9,513.0 823.9,511.5 825.9,513.0" fill="none" stroke="#F0A030" stroke-width="1" shape-rendering="crispEdges"/>
<polyline points="832.2,513.0 834.2,511.5 836.2,513.0" fill="none" stroke="#F0A030" stroke-width="1" shape-rendering="crispEdges"/>
<text x="471" y="338" text-anchor="end" font-family="Liberation Sans" font-size="11" stroke="#000" stroke-width="0.15">100</text>
<text x="471" y="374" text-anchor="end" font-family="Liberation Sans" font-size="11" stroke="#000" stroke-width="0.15">80</text>
<text x="471" y="410" text-anchor="end" font-family="Liberation Sans" font-size="11" stroke="#000" stroke-width="0.15">60</text>
<text x="471" y="446" text-anchor="end" font-family="Liberation Sans" font-size="11" stroke="#000" stroke-width="0.15">40</text>
<text x="471" y="482" text-anchor="end" font-family="Liberation Sans" font-size="11" stroke="#000" stroke-width="0.15">20</text>
<text x="471" y="518" text-anchor="end" font-family="Liberation Sans" font-size="11" stroke="#000" stroke-width="0.15">0</text>
<text x="477.3" y="530.5" text-anchor="middle" font-family="Liberation Sans" font-size="11" stroke="#000" stroke-width="0.15">0</text>
<text x="513.8" y="530.5" text-anchor="middle" font-family="Liberation Sans" font-size="11" stroke="#000" stroke-width="0.15">100</text>
<text x="550.3" y="530.5" text-anchor="middle" font-family="Liberation Sans" font-size="11" stroke="#000" stroke-width="0.15">200</text>
<text x="586.8" y="530.5" text-anchor="middle" font-family="Liberation Sans" font-size="11" stroke="#000" stroke-width="0.15">300</text>
<text x="623.3" y="530.5" text-anchor="middle" font-family="Liberation Sans" font-size="11" stroke="#000" stroke-width="0.15">400</text>
<text x="659.8" y="530.5" text-anchor="middle" font-family="Liberation Sans" font-size="11" stroke="#000" stroke-width="0.15">500</text>
<text x="696.2" y="530.5" text-anchor="middle" font-family="Liberation Sans" font-size="11" stroke="#000" stroke-width="0.15">600</text>
<text x="732.7" y="530.5" text-anchor="middle" font-family="Liberation Sans" font-size="11" stroke="#000" stroke-width="0.15">700</text>
<text x="769.2" y="530.5" text-anchor="middle" font-family="Liberation Sans" font-size="11" stroke="#000" stroke-width="0.15">800</text>
<text x="805.7" y="530.5" text-anchor="middle" font-family="Liberation Sans" font-size="11" stroke="#000" stroke-width="0.15">900</text>
<text x="842.2" y="530.5" text-anchor="middle" font-family="Liberation Sans" font-size="11" stroke="#000" stroke-width="0.15">1000</text>
<text x="660" y="545" text-anchor="middle" font-family="Liberation Sans" font-size="11" stroke="#000" stroke-width="0.15">freq [Hz]</text>
<text x="645.2" y="326" text-anchor="middle" font-family="Liberation Sans" font-size="11" fill="#1010A8" stroke="#1010A8" stroke-width="0.2">Sound Spectrum</text>
<line x1="802.5" y1="348.5" x2="813" y2="348.5" stroke="#8B1010" stroke-width="1"/>
<line x1="802.5" y1="362.5" x2="813" y2="362.5" stroke="#F0A030" stroke-width="1"/>
<text x="816.5" y="352" font-family="Liberation Sans" font-size="11" stroke="#000" stroke-width="0.15" letter-spacing="-0.05">Left</text>
<text x="816.5" y="366" font-family="Liberation Sans" font-size="11" stroke="#000" stroke-width="0.15" letter-spacing="-0.2">Right</text>
</svg>
<!-- frame edges -->
<div class="abs" style="left:0;top:30px;width:1px;height:552px;background:#0030C8"></div>
<div class="abs" style="left:1px;top:30px;width:1px;height:552px;background:#0040D8"></div>
<div class="abs" style="left:2px;top:30px;width:1px;height:552px;background:#1C5CF0"></div>
<div class="abs" style="left:3px;top:30px;width:1px;height:552px;background:#0A4CD8"></div>
<div class="abs" style="left:870px;top:30px;width:1px;height:552px;background:#1E50D0"></div>
<div class="abs" style="left:871px;top:30px;width:1px;height:552px;background:#0046E0"></div>
<div class="abs" style="left:872px;top:30px;width:1px;height:552px;background:#0020A8"></div>
<div class="abs" style="left:873px;top:30px;width:1px;height:552px;background:#001890"></div>
<div class="abs" style="left:0;top:578px;width:874px;height:1px;background:#0040C8"></div>
<div class="abs" style="left:0;top:579px;width:874px;height:1px;background:#0046DC"></div>
<div class="abs" style="left:0;top:580px;width:874px;height:1px;background:#0020A8"></div>
<div class="abs" style="left:0;top:581px;width:874px;height:1px;background:#001890"></div>
<div class="abs" style="left:4px;top:49px;width:1px;height:528px;background:#F8F8F4"></div>
<div class="abs" style="left:869px;top:49px;width:1px;height:529px;background:#E8ECF0"></div>
<div class="abs" style="left:4px;top:577px;width:866px;height:1px;background:#FFFFFF"></div>

</body></html>
